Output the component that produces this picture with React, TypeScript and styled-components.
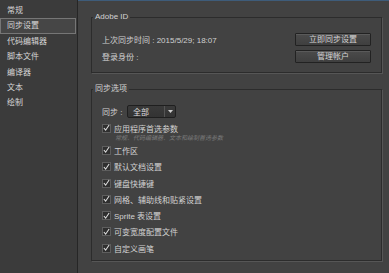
import React from "react";
import styled, { createGlobalStyle } from "styled-components";

const Global = createGlobalStyle`
  html, body { margin: 0; padding: 0; background: #424242; }
  body { font-family: "Liberation Sans", "Noto Sans CJK SC", sans-serif; }
`;

const Window = styled.div`
  display: flex;
  width: 389px;
  height: 273px;
  background: #424242;
  color: #d2d2d2;
  font-size: 8px;
  overflow: hidden;
`;

const Sidebar = styled.nav`
  width: 78px;
  flex: none;
  background: #3b3b3b;
  border-right: 1px solid #262626;
  padding-top: 3px;
  box-sizing: border-box;
  display: flex;
  flex-direction: column;
`;

const NavItem = styled.div<{ $active?: boolean }>`
  height: 15.4px;
  line-height: 15.4px;
  padding-left: 7px;
  margin-right: 1px;
  box-sizing: border-box;
  white-space: nowrap;
  color: #d6d6d6;
  ${(p) =>
    p.$active &&
    `
    border: 1px solid #767676;
    background: #464646;
    line-height: 13.4px;
    padding-left: 6px;
  `}
`;

const Main = styled.main`
  flex: 1;
  border-top: 1px solid #3e5c7a;
  padding: 11px 7px 0 13px;
  display: flex;
  flex-direction: column;
  gap: 11px;
`;

const Group = styled.fieldset<{ $h: number }>`
  margin: 0;
  height: ${(p) => p.$h}px;
  box-sizing: border-box;
  border: 1px solid #2c2c2c;
  box-shadow: 1px 1px 0 #565656;
  padding: 0 10px 0 10px;
`;

const Legend = styled.legend`
  padding: 0 2px;
  margin-left: -9px;
  line-height: 10px;
  color: #d2d2d2;
`;

const InfoGrid = styled.div`
  display: grid;
  grid-template-columns: 1fr 76px;
  row-gap: 4px;
  align-items: center;
  margin-top: 11px;
`;

const InfoText = styled.div`
  color: #d0d0d0;
  white-space: nowrap;
`;

const Button = styled.button`
  height: 13px;
  padding: 0;
  font: inherit;
  font-size: 8px;
  color: #d4d4d4;
  background: linear-gradient(#4b4b4b, #3f3f3f);
  border: 1px solid #222;
  box-shadow: inset 0 1px 0 #5a5a5a;
  border-radius: 1px;
  line-height: 11px;
`;

const SyncRow = styled.div`
  display: flex;
  align-items: center;
  margin-top: 11px;
  margin-bottom: 2px;
`;

const SyncLabel = styled.span`
  width: 25px;
`;

const Select = styled.div`
  width: 49px;
  height: 13px;
  box-sizing: border-box;
  border: 1px solid #1f1f1f;
  border-radius: 2px;
  background: linear-gradient(#3a3a3a, #333);
  display: flex;
  align-items: center;
`;

const SelectText = styled.span`
  flex: 1;
  padding-left: 5px;
  color: #dcdcdc;
`;

const SelectArrow = styled.span`
  width: 10px;
  height: 100%;
  border-left: 1px solid #555;
  display: flex;
  align-items: center;
  justify-content: center;
`;

const CheckList = styled.div`
  display: flex;
  flex-direction: column;
`;

const CheckRow = styled.label`
  display: flex;
  align-items: center;
  gap: 3px;
  height: 16.3px;
  white-space: nowrap;
  color: #d2d2d2;
`;

const Box = styled.span`
  width: 9px;
  height: 9px;
  box-sizing: border-box;
  border: 1px solid #5e5e5e;
  background: #2f2f2f;
  display: inline-flex;
  align-items: center;
  justify-content: center;
`;

const Hint = styled.div`
  font-size: 6px;
  font-style: italic;
  color: #7a7a7a;
  padding-left: 13px;
  margin-top: -2px;
  height: 8px;
  line-height: 8px;
  white-space: nowrap;
`;

const Check = ({ label }: { label: string }) => (
  <CheckRow>
    <Box>
      <svg width="8" height="8" viewBox="0 0 8 8">
        <polyline points="1,4 3,6.5 7,0.5" fill="none" stroke="#e0e0e0" strokeWidth="1.2" />
      </svg>
    </Box>
    {label}
  </CheckRow>
);

const nav = ["常规", "同步设置", "代码编辑器", "脚本文件", "编译器", "文本", "绘制"];
const checks = ["工作区", "默认文档设置", "键盘快捷键", "网格、辅助线和贴紧设置", "Sprite 表设置", "可变宽度配置文件", "自定义画笔"];

export default function App() {
  return (
    <>
      <Global />
      <Window>
        <Sidebar>
          {nav.map((n, i) => (
            <NavItem key={n} $active={i === 1}>
              {n}
            </NavItem>
          ))}
        </Sidebar>
        <Main>
          <Group $h={61}>
            <Legend>Adobe ID</Legend>
            <InfoGrid>
              <InfoText>上次同步时间 : 2015/5/29; 18:07</InfoText>
              <Button>立即同步设置</Button>
              <InfoText>登录身份 :</InfoText>
              <Button>管理帐户</Button>
            </InfoGrid>
          </Group>
          <Group $h={177}>
            <Legend>同步选项</Legend>
            <SyncRow>
              <SyncLabel>同步 :</SyncLabel>
              <Select>
                <SelectText>全部</SelectText>
                <SelectArrow>
                  <svg width="5" height="3" viewBox="0 0 5 3">
                    <polygon points="0,0 5,0 2.5,3" fill="#cfcfcf" />
                  </svg>
                </SelectArrow>
              </Select>
            </SyncRow>
            <CheckList>
              <Check label="应用程序首选参数" />
              <Hint>常规、代码编辑器、文本和绘制首选参数</Hint>
              {checks.map((c) => (
                <Check key={c} label={c} />
              ))}
            </CheckList>
          </Group>
        </Main>
      </Window>
    </>
  );
}
